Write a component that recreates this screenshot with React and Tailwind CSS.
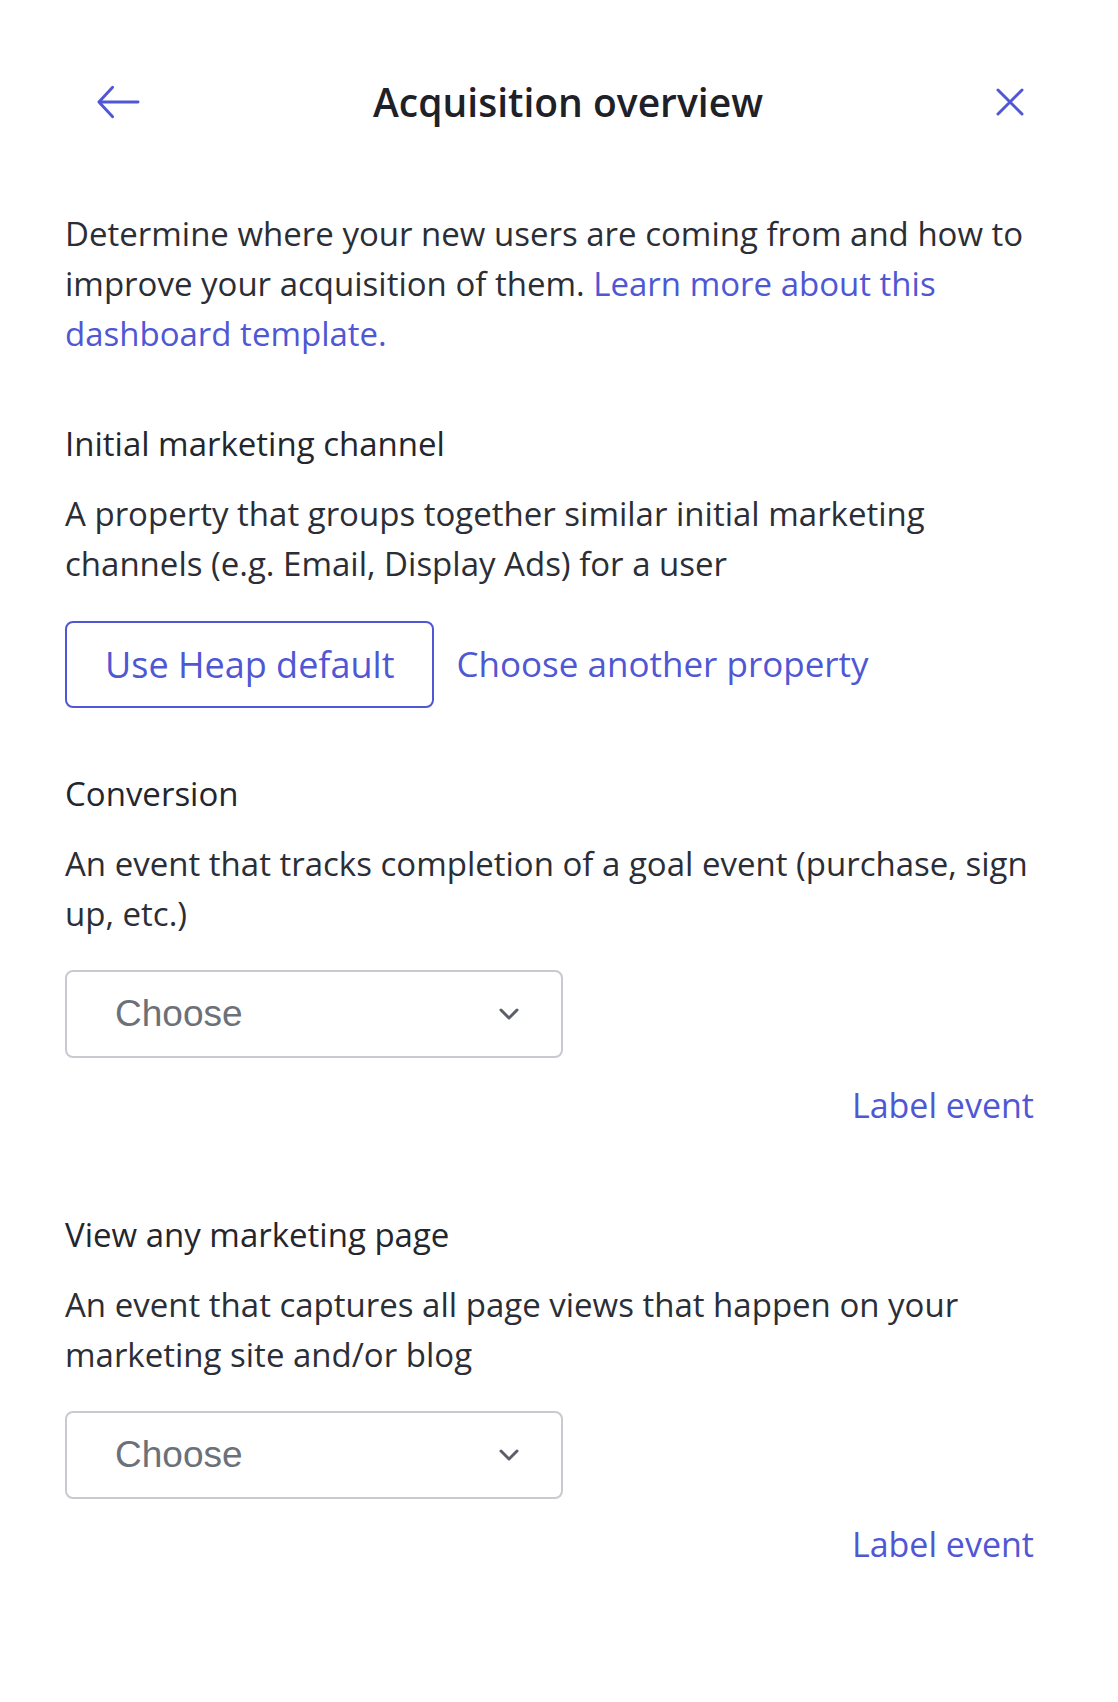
import React from "react";

const BLUE = "text-[#4f57d4]";

function ChevronDown() {
  return (
    <svg width="20" height="12" viewBox="0 0 20 12" fill="none">
      <path d="M2 2l8 8 8-8" stroke="#5a5f68" strokeWidth="3" strokeLinecap="round" strokeLinejoin="round" />
    </svg>
  );
}

function Select() {
  return (
    <button className="flex items-center justify-between w-[498px] h-[88px] border-2 border-[#c8cad0] rounded-[8px] pl-[48px] pr-[42px] bg-white">
      <span className="text-[37px] text-[#6b7079] font-['Liberation_Sans',sans-serif]">Choose</span>
      <ChevronDown />
    </button>
  );
}

function Section({ title, desc, children }) {
  return (
    <div>
      <h3 className="text-[33px] leading-[50px] text-[#23262d]">{title}</h3>
      <p className="mt-[20px] text-[33px] leading-[50px] text-[#2b2e36]">{desc}</p>
      {children}
    </div>
  );
}

export default function App() {
  return (
    <div className="min-h-[1702px] bg-white font-['Open_Sans',sans-serif] pt-[77px] pl-[65px] pr-[80px]">
      <div className="flex items-center justify-between h-[50px] pl-[31px] pr-[14px]">
        <button className="w-[44px] h-[36px] flex items-center">
          <svg width="45" height="36" viewBox="0 0 45 36" fill="none">
            <path d="M43 18H3M17 3L3 18l14 15" stroke="#4f57d4" strokeWidth="3" strokeLinecap="round" strokeLinejoin="round" />
          </svg>
        </button>
        <h1 className="text-[39px] leading-[50px] font-semibold text-[#1f2128]">Acquisition overview</h1>
        <button className="w-[28px] h-[28px] flex items-center justify-center">
          <svg width="28" height="28" viewBox="0 0 28 28" fill="none">
            <path d="M2 2l24 24M26 2L2 26" stroke="#4f57d4" strokeWidth="3" strokeLinecap="round" />
          </svg>
        </button>
      </div>

      <p className="mt-[82px] text-[33px] leading-[50px] text-[#2b2e36]">
        Determine where your new users are coming from and how to improve your acquisition of them.{" "}
        <a className={BLUE}>Learn more about this dashboard template.</a>
      </p>

      <div className="mt-[60px]">
        <Section
          title="Initial marketing channel"
          desc="A property that groups together similar initial marketing channels (e.g. Email, Display Ads) for a user"
        >
          <div className="mt-[32px] flex items-center gap-[22px]">
            <button className={`h-[87px] px-[38px] border-2 border-[#4f57d4] rounded-[8px] text-[36px] ${BLUE}`}>
              Use Heap default
            </button>
            <a className={`text-[35px] ${BLUE}`}>Choose another property</a>
          </div>
        </Section>
      </div>

      <div className="mt-[61px]">
        <Section
          title="Conversion"
          desc="An event that tracks completion of a goal event (purchase, sign up, etc.)"
        >
          <div className="mt-[31px]">
            <Select />
          </div>
          <div className="mt-[22px] flex justify-end pr-[4px]">
            <a className={`text-[34px] leading-[50px] ${BLUE}`}>Label event</a>
          </div>
        </Section>
      </div>

      <div className="mt-[80px]">
        <Section
          title="View any marketing page"
          desc="An event that captures all page views that happen on your marketing site and/or blog"
        >
          <div className="mt-[31px]">
            <Select />
          </div>
          <div className="mt-[20px] flex justify-end pr-[4px]">
            <a className={`text-[34px] leading-[50px] ${BLUE}`}>Label event</a>
          </div>
        </Section>
      </div>
    </div>
  );
}
